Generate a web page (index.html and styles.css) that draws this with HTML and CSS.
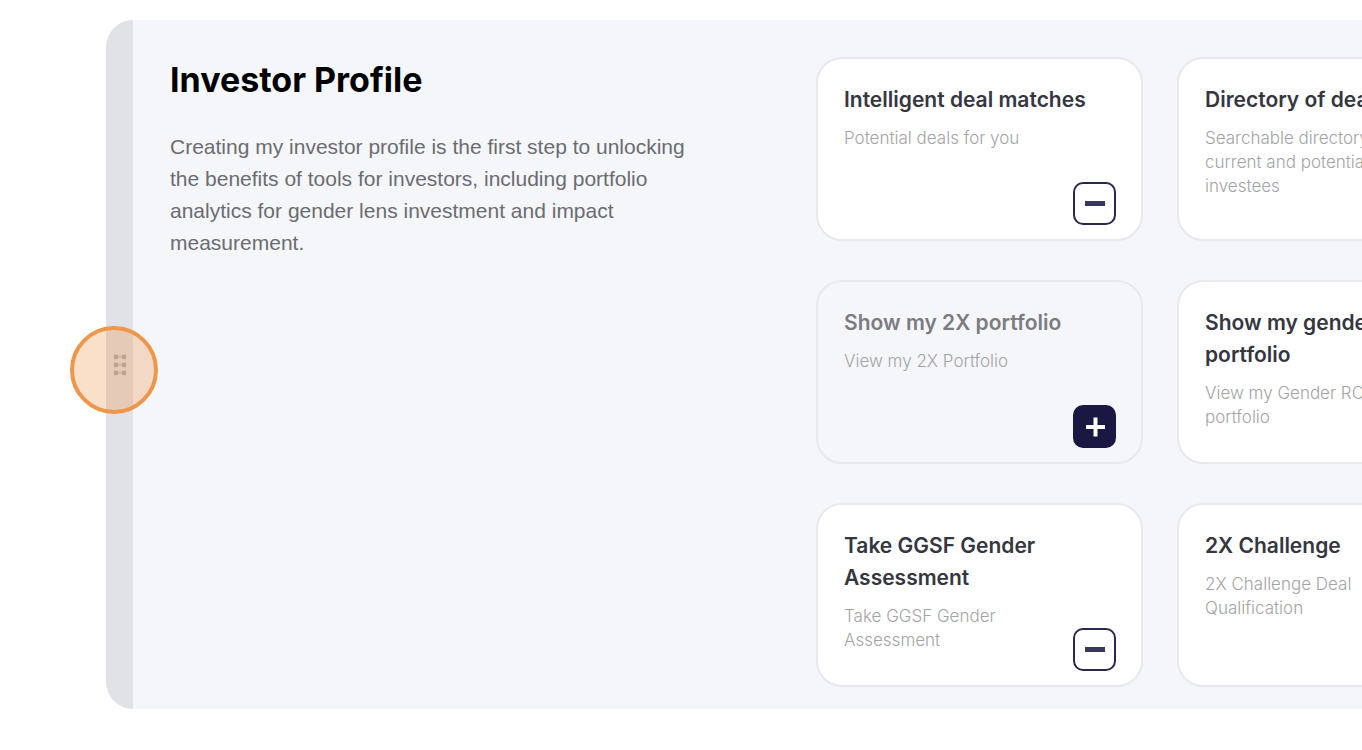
FILE: index.html
```html
<!DOCTYPE html>
<html lang="en">
<head>
    <meta charset="UTF-8">
    <meta name="viewport" content="width=device-width, initial-scale=1.0">
    <title>Investor Profile</title>
    <link rel="stylesheet" href="styles.css">
</head>
<body>
    <section class="panel">
        <!-- Drag handle -->
        <button class="handle" type="button" aria-label="Move section">
            <svg width="16" height="24" viewBox="0 0 16 24" fill="#a9a9ae">
                <circle cx="4" cy="4" r="2.4"/>
                <circle cx="12" cy="4" r="2.4"/>
                <circle cx="4" cy="12" r="2.4"/>
                <circle cx="12" cy="12" r="2.4"/>
                <circle cx="4" cy="20" r="2.4"/>
                <circle cx="12" cy="20" r="2.4"/>
                <path d="M4 3.4h8v1.2H4zM4 11.4h8v1.2H4zM4 19.4h8v1.2H4z"/>
            </svg>
            <span class="marker"></span>
        </button>

        <div class="info">
            <h1>Investor Profile</h1>
            <p>Creating my investor profile is the first step to unlocking the benefits of tools for investors, including portfolio analytics for gender lens investment and impact measurement.</p>
        </div>

        <!-- Tool cards -->
        <div class="cards">
            <div class="card">
                <h2>Intelligent deal matches</h2>
                <p>Potential deals for you</p>
                <button class="toggle" type="button" aria-label="Remove">
                    <svg width="22" height="22" viewBox="0 0 22 22"><path d="M1 10.5h20" stroke="#3a375c" stroke-width="5"/></svg>
                </button>
            </div>
            <div class="card">
                <h2>Directory of deals</h2>
                <p>Searchable directory of current and potential investees</p>
            </div>
            <div class="card card-off">
                <h2>Show my 2X portfolio</h2>
                <p>View my 2X Portfolio</p>
                <button class="toggle toggle-add" type="button" aria-label="Add">
                    <svg width="22" height="22" viewBox="0 0 22 22"><path d="M2 11h19M11.500 1.500v19" stroke="#fff" stroke-width="4"/></svg>
                </button>
            </div>
            <div class="card">
                <h2>Show my gender ROI portfolio</h2>
                <p>View my Gender ROI portfolio</p>
            </div>
            <div class="card">
                <h2>Take GGSF Gender Assessment</h2>
                <p>Take GGSF Gender Assessment</p>
                <button class="toggle" type="button" aria-label="Remove">
                    <svg width="22" height="22" viewBox="0 0 22 22"><path d="M1 10.5h20" stroke="#3a375c" stroke-width="5"/></svg>
                </button>
            </div>
            <div class="card">
                <h2>2X Challenge</h2>
                <p>2X Challenge Deal Qualification</p>
            </div>
        </div>
    </section>
</body>
</html>
```
FILE: styles.css
```css
* {
    box-sizing: border-box;
}
body {
    margin: 0;
    padding: 20px 0 40px 106px;
    background-color: #fff;
    font-family: Inter, "Liberation Sans", sans-serif;
    overflow-x: hidden;
}
h1, h2, p {
    margin: 0;
}
.panel {
    display: flex;
    background-color: #f5f6fa;
    border-radius: 28px 0 0 28px;
}
.handle {
    position: relative;
    flex: none;
    display: flex;
    align-items: center;
    justify-content: center;
    width: 27px;
    padding: 0;
    border: none;
    border-radius: 28px 0 0 28px;
    background-color: #e1e2e6;
    cursor: grab;
}
.marker {
    position: absolute;
    left: -36px;
    top: calc(50% - 39px);
    width: 88px;
    height: 88px;
    border: 4px solid #ee964b;
    border-radius: 50%;
    background-color: rgba(238, 150, 75, 0.3);
}
.info {
    flex: 1;
    padding: 40px 120px 40px 37px;
}
.info h1 {
    font-size: 34px;
    line-height: 40px;
    font-weight: 700;
    color: #000;
}
.info p {
    margin-top: 31px;
    font-family: "Liberation Sans", Arial, sans-serif;
    font-size: 21px;
    line-height: 32px;
    color: #6b6c71;
}
.cards {
    flex: none;
    display: grid;
    grid-template-columns: 327px 327px;
    grid-auto-rows: minmax(184px, auto);
    gap: 39px 34px;
    padding: 37px 0 22px;
    margin-right: -142px;
}
.card {
    position: relative;
    padding: 25px 26px;
    border: 2px solid #e8e9ec;
    border-radius: 26px;
    background-color: #fff;
}
.card h2 {
    font-size: 21px;
    line-height: 32px;
    font-weight: 600;
    color: #35363f;
}
.card p {
    max-width: 204px;
    margin-top: 10px;
    font-size: 17px;
    line-height: 24px;
    font-weight: 300;
    color: #a3a3a6;
}
.card-off {
    background-color: #f5f6fa;
}
.card-off h2 {
    color: #7b7c82;
}
.toggle {
    position: absolute;
    right: 25px;
    bottom: 14px;
    display: flex;
    align-items: center;
    justify-content: center;
    width: 43px;
    height: 43px;
    padding: 0;
    border: 2px solid #2b2850;
    border-radius: 10px;
    background-color: #fff;
    cursor: pointer;
}
.toggle-add {
    border-color: #1a1843;
    background-color: #1a1843;
}
```
